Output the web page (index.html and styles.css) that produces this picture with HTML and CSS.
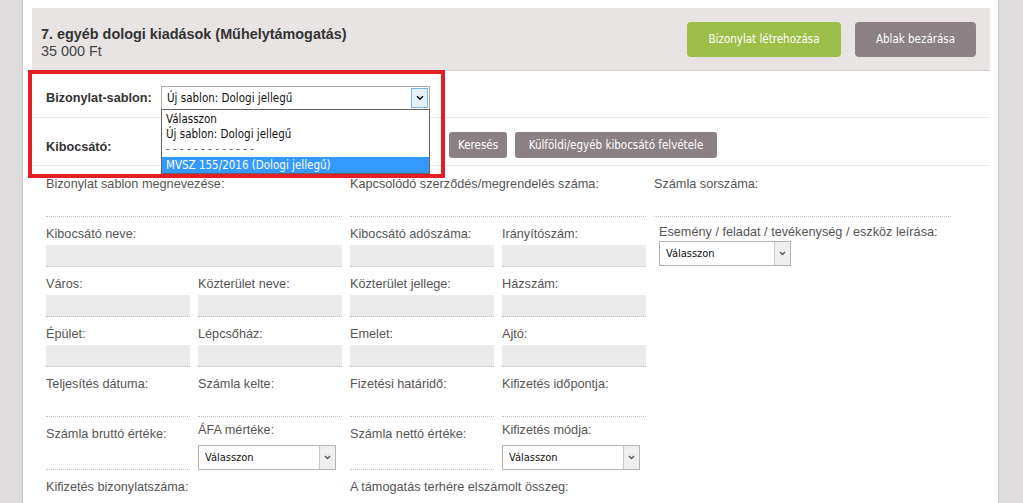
FILE: index.html
```html
<!DOCTYPE html>
<html lang="hu">
<head>
<meta charset="utf-8">
<title>Bizonylat</title>
<link rel="stylesheet" href="styles.css">
</head>
<body>
<div class="page">
  <header class="head">
    <div class="head-title">
      <div class="title">7. egyéb dologi kiadások (Műhelytámogatás)</div>
      <div class="amount">35 000 Ft</div>
    </div>
    <div class="head-actions">
      <button class="btn btn-green btn-lg">Bizonylat létrehozása</button>
      <button class="btn btn-gray btn-lg btn-close">Ablak bezárása</button>
    </div>
  </header>

  <div class="row row-template">
    <div class="row-label">Bizonylat-sablon:</div>
    <div class="select select-wide">
      <span class="select-text">Új sablon: Dologi jellegű</span>
      <span class="select-arrow"><svg width="8" height="6" viewBox="0 0 8 6"><path d="M1 1.2 L4 4.2 L7 1.2" fill="none" stroke="#111" stroke-width="1.6"/></svg></span>
      <ul class="dropdown">
        <li>Válasszon</li>
        <li>Új sablon: Dologi jellegű</li>
        <li class="sep">- - - - - - - - - - - - -</li>
        <li class="active">MVSZ 155/2016 (Dologi jellegű)</li>
      </ul>
    </div>
  </div>

  <div class="row row-issuer">
    <div class="row-label">Kibocsátó:</div>
    <input class="issuer-input" type="text">
    <button class="btn btn-gray btn-sm btn-search">Keresés</button>
    <button class="btn btn-gray btn-sm btn-foreign">Külföldi/egyéb kibocsátó felvétele</button>
  </div>

  <div class="form">
    <div class="field c1 span2"><div class="field-label">Bizonylat sablon megnevezése:</div><div class="field-input"></div></div>
    <div class="field span2"><div class="field-label">Kapcsolódó szerződés/megrendelés száma:</div><div class="field-input"></div></div>
    <div class="field col5"><div class="field-label">Számla sorszáma:</div><div class="field-input"></div></div>

    <div class="field c1 span2"><div class="field-label">Kibocsátó neve:</div><div class="field-input filled"></div></div>
    <div class="field"><div class="field-label">Kibocsátó adószáma:</div><div class="field-input filled"></div></div>
    <div class="field"><div class="field-label">Irányítószám:</div><div class="field-input filled"></div></div>
    <div class="field col5 field-event">
      <div class="field-label">Esemény / feladat / tevékenység / eszköz leírása:</div>
      <div class="select select-sm select-event">
        <span class="select-text">Válasszon</span>
        <span class="select-arrow"><svg width="7" height="5" viewBox="0 0 7 5"><path d="M1 1 L3.5 3.5 L6 1" fill="none" stroke="#555" stroke-width="1.3"/></svg></span>
      </div>
    </div>

    <div class="field c1"><div class="field-label">Város:</div><div class="field-input filled"></div></div>
    <div class="field"><div class="field-label">Közterület neve:</div><div class="field-input filled"></div></div>
    <div class="field"><div class="field-label">Közterület jellege:</div><div class="field-input filled"></div></div>
    <div class="field"><div class="field-label">Házszám:</div><div class="field-input filled"></div></div>

    <div class="field c1"><div class="field-label">Épület:</div><div class="field-input filled"></div></div>
    <div class="field"><div class="field-label">Lépcsőház:</div><div class="field-input filled"></div></div>
    <div class="field"><div class="field-label">Emelet:</div><div class="field-input filled"></div></div>
    <div class="field"><div class="field-label">Ajtó:</div><div class="field-input filled"></div></div>

    <div class="field c1"><div class="field-label">Teljesítés dátuma:</div><div class="field-input"></div></div>
    <div class="field"><div class="field-label">Számla kelte:</div><div class="field-input"></div></div>
    <div class="field"><div class="field-label">Fizetési határidő:</div><div class="field-input"></div></div>
    <div class="field"><div class="field-label">Kifizetés időpontja:</div><div class="field-input"></div></div>

    <div class="field c1"><div class="field-label">Számla bruttó értéke:</div><div class="field-input"></div></div>
    <div class="field field-sel">
      <div class="field-label">ÁFA mértéke:</div>
      <div class="select select-sm">
        <span class="select-text">Válasszon</span>
        <span class="select-arrow"><svg width="7" height="5" viewBox="0 0 7 5"><path d="M1 1 L3.5 3.5 L6 1" fill="none" stroke="#555" stroke-width="1.3"/></svg></span>
      </div>
    </div>
    <div class="field"><div class="field-label">Számla nettó értéke:</div><div class="field-input"></div></div>
    <div class="field field-sel">
      <div class="field-label">Kifizetés módja:</div>
      <div class="select select-sm">
        <span class="select-text">Válasszon</span>
        <span class="select-arrow"><svg width="7" height="5" viewBox="0 0 7 5"><path d="M1 1 L3.5 3.5 L6 1" fill="none" stroke="#555" stroke-width="1.3"/></svg></span>
      </div>
    </div>

    <div class="field c1 span2"><div class="field-label">Kifizetés bizonylatszáma:</div><div class="field-input"></div></div>
    <div class="field span2"><div class="field-label">A támogatás terhére elszámolt összeg:</div><div class="field-input"></div></div>
  </div>

  <div class="highlight"></div>
</div>
</body>
</html>
```
FILE: styles.css
```css
html, body {
  margin: 0;
  height: 100%;
}
body {
  background: #dddbdb;
  font-family: "Liberation Sans", Arial, sans-serif;
  overflow: hidden;
}
.page {
  position: relative;
  margin: 0 24px 0 22px;
  border-left: 1px solid #cbc9c9;
  border-right: 1px solid #cbc9c9;
  background: #fff;
  height: 503px;
  box-sizing: border-box;
  padding: 8px 8px 0 9px;
}

/* header */
.head {
  display: flex;
  justify-content: space-between;
  align-items: center;
  height: 62px;
  background: #e7e4e3;
  border-bottom: 1px solid #d5d2d1;
  padding: 0 14px 0 9px;
}
.head-title {
  align-self: flex-start;
  padding-top: 18px;
}
.title {
  font-weight: bold;
  font-size: 14.4px;
  line-height: 17px;
  color: #333;
}
.amount {
  font-size: 14.4px;
  line-height: 17px;
  color: #444;
}
.head-actions {
  display: flex;
  gap: 14px;
}
.btn {
  border: 0;
  color: #fff;
  font-family: "DejaVu Sans Condensed", "DejaVu Sans", sans-serif;
  font-size: 11.5px;
  padding: 0;
  white-space: nowrap;
}
.btn-lg {
  height: 35px;
  border-radius: 4px;
}
.btn-green {
  background: #9dbe48;
  width: 154px;
}
.btn-gray {
  background: #8b8083;
}
.btn-close {
  width: 121px;
}
.btn-sm {
  height: 26px;
  border-radius: 3px;
}
.btn-search {
  width: 58px;
  margin-right: 8px;
}
.btn-foreign {
  width: 202px;
}

/* top rows */
.row {
  display: flex;
  align-items: center;
  padding-left: 14px;
  border-bottom: 1px solid #e6e6e6;
}
.row-template {
  padding-top: 15px;
  padding-bottom: 7px;
}
.row-issuer {
  padding-top: 14px;
  padding-bottom: 7px;
}
.row-label {
  width: 115px;
  font-weight: bold;
  font-size: 12.7px;
  color: #333;
}
.row-issuer .row-label {
  padding-top: 3px;
}
.issuer-input {
  width: 269px;
  height: 24px;
  margin: 0 19px 0 0;
  box-sizing: border-box;
  border: 1px solid #cfcfcf;
}

/* select */
.select {
  position: relative;
  display: flex;
  align-items: center;
  box-sizing: border-box;
  border: 1px solid #b4b4b4;
  background: #fff;
  font-family: "DejaVu Sans Condensed", "DejaVu Sans", sans-serif;
  font-size: 11.5px;
  color: #111;
}
.select-text {
  flex: 1;
  padding-left: 5px;
  white-space: nowrap;
}
.select-arrow {
  align-self: stretch;
  width: 15px;
  display: flex;
  align-items: center;
  justify-content: center;
  border-left: 1px solid #c8c8c8;
  background: #efefef;
}
.select-wide {
  width: 269px;
  height: 24px;
  border-color: #abadb3;
}
.select-wide .select-arrow {
  width: 15px;
  margin: 1px;
  border: 1px solid #7eb4ea;
  background: #e5f0fb;
}
.select-sm {
  width: 138px;
  height: 25px;
  font-size: 11px;
}
.select-sm .select-text {
  padding-left: 6px;
}
.select-event {
  width: 132px;
}
.dropdown {
  position: absolute;
  top: 100%;
  left: -1px;
  width: calc(100% + 2px);
  box-sizing: border-box;
  margin: 0;
  padding: 2px 0 0;
  list-style: none;
  border: 1px solid #646464;
  background: #fff;
  z-index: 2;
}
.dropdown li {
  line-height: 15px;
  padding-left: 4px;
  white-space: nowrap;
}
.dropdown li.sep {
  color: #666;
}
.dropdown li.active {
  line-height: 16px;
  background: #3399ff;
  color: #fff;
}

/* form grid */
.form {
  display: grid;
  grid-template-columns: repeat(4, 144px) 297px;
  column-gap: 8px;
  padding: 1px 0 0 14px;
}
.field {
  display: flex;
  flex-direction: column;
  padding-top: 10px;
}
.c1 {
  grid-column: 1 / span 1;
}
.span2 {
  grid-column-end: span 2;
}
.c1.span2 {
  grid-column: 1 / span 2;
}
.col5 {
  grid-column: 5;
}
.field-label {
  font-size: 12.7px;
  line-height: 15px;
  color: #555;
  margin-bottom: 3px;
  white-space: nowrap;
}
.field-input {
  flex: 1;
  min-height: 21px;
  border-bottom: 1px dotted #c2c2c2;
}
.field-input.filled {
  background: #ebebeb;
}
.field-event {
  padding-top: 8px;
  padding-left: 5px;
}
.field-event .field-label {
  margin-bottom: 1px;
}
.field-sel {
  padding-top: 6px;
}
.field-sel .field-label {
  margin-bottom: 7px;
}

/* annotation */
.highlight {
  position: absolute;
  left: 5px;
  top: 70px;
  width: 417px;
  height: 108px;
  box-sizing: border-box;
  border: 4px solid #e41e26;
  z-index: 3;
  pointer-events: none;
}
```
